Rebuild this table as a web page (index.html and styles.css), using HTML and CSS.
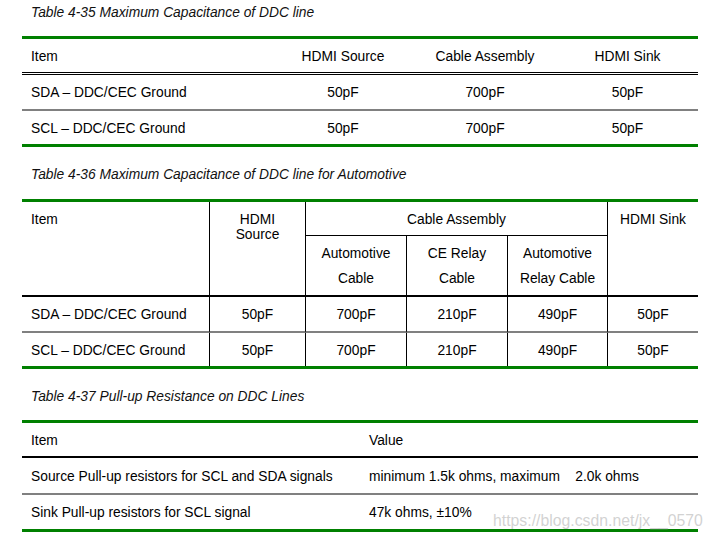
FILE: index.html
```html
<!DOCTYPE html>
<html>
<head>
<meta charset="utf-8">
<link rel="stylesheet" href="styles.css">
</head>
<body>
<div class="page">
  <div class="title">Table 4-35 Maximum Capacitance of DDC line</div>
  <div class="tbl t1">
    <div class="cell head left">Item</div>
    <div class="cell head center">HDMI Source</div>
    <div class="cell head center">Cable Assembly</div>
    <div class="cell head center">HDMI Sink</div>

    <div class="cell r1 left">SDA – DDC/CEC Ground</div>
    <div class="cell r1 center">50pF</div>
    <div class="cell r1 center">700pF</div>
    <div class="cell r1 center">50pF</div>

    <div class="cell r2 left">SCL – DDC/CEC Ground</div>
    <div class="cell r2 center">50pF</div>
    <div class="cell r2 center">700pF</div>
    <div class="cell r2 center">50pF</div>
  </div>

  <div class="title title-gap">Table 4-36 Maximum Capacitance of DDC line for Automotive</div>
  <div class="tbl t2">
    <div class="t2-head">
      <div class="hc h-item">Item</div>
      <div class="hc h-src vl">HDMI<br>Source</div>
      <div class="hc h-cable vl">Cable Assembly</div>
      <div class="hc h-sink vl">HDMI Sink</div>
      <div class="sub s1 vl">Automotive<br>Cable</div>
      <div class="sub s2 vl">CE Relay<br>Cable</div>
      <div class="sub s3 vl">Automotive<br>Relay Cable</div>
    </div>
    <div class="t2-body">
      <div class="cell r1 left">SDA – DDC/CEC Ground</div>
      <div class="cell r1 center vl">50pF</div>
      <div class="cell r1 center vl">700pF</div>
      <div class="cell r1 center vl">210pF</div>
      <div class="cell r1 center vl">490pF</div>
      <div class="cell r1 center vl">50pF</div>

      <div class="cell r2 left">SCL – DDC/CEC Ground</div>
      <div class="cell r2 center vl">50pF</div>
      <div class="cell r2 center vl">700pF</div>
      <div class="cell r2 center vl">210pF</div>
      <div class="cell r2 center vl">490pF</div>
      <div class="cell r2 center vl">50pF</div>
    </div>
  </div>

  <div class="title title-gap">Table 4-37 Pull-up Resistance on DDC Lines</div>
  <div class="tbl t3">
    <div class="cell h3 left">Item</div>
    <div class="cell h3 left">Value</div>

    <div class="cell r31 left">Source Pull-up resistors for SCL and SDA signals</div>
    <div class="cell r31 left">minimum 1.5k ohms, maximum&nbsp;&nbsp;&nbsp; 2.0k ohms</div>

    <div class="cell r32 left">Sink Pull-up resistors for SCL signal</div>
    <div class="cell r32 left">47k ohms, ±10%</div>
  </div>
</div>
<div class="watermark">https://blog.csdn.net/jx__0570</div>
</body>
</html>
```

FILE: styles.css
```css
html, body {
  margin: 0;
  padding: 0;
  background: #ffffff;
}

body {
  width: 713px;
  height: 539px;
  position: relative;
  overflow: hidden;
  font-family: "Liberation Sans", Arial, sans-serif;
  font-size: 13.8px;
  line-height: 16px;
  color: #000000;
}

.page {
  padding: 4px 15px 0 22px;
}

.title {
  box-sizing: border-box;
  font-style: italic;
  height: 16px;
  padding-top: 1px;
  padding-left: 9px;
  line-height: 16px;
  color: #111;
  white-space: nowrap;
  overflow: visible;
}

.title-gap {
  margin-top: 19px;
}

.tbl {
  width: 676px;
  border-top: 3px solid #008000;
  border-bottom: 3px solid #008000;
}

.t1 {
  margin-top: 16px;
  display: grid;
  grid-template-columns: 251px 140px 144px 141px;
}

.t2 {
  margin-top: 17px;
}

.t3 {
  margin-top: 16px;
  display: grid;
  grid-template-columns: 338px 338px;
}

.cell {
  box-sizing: border-box;
  display: flex;
  align-items: center;
  padding-top: 2px;
  white-space: nowrap;
}

.left {
  justify-content: flex-start;
  padding-left: 9px;
}

.center {
  justify-content: center;
}

.vl {
  border-left: 1px solid #000;
}

/* table 1 rows */
.head {
  height: 36px;
  border-bottom: 3px double #000;
}

.r1 {
  height: 36px;
  border-bottom: 2px solid #808080;
}

.r2 {
  height: 33px;
}

/* table 2 */
.t2-head {
  display: grid;
  grid-template-columns: 187px 96px 101px 101px 100px 91px;
  grid-template-rows: 34px 59px;
  border-bottom: 2px solid #000;
}

.t2-body {
  display: grid;
  grid-template-columns: 187px 96px 101px 101px 100px 91px;
}

.hc {
  box-sizing: border-box;
  padding-top: 10px;
  line-height: 15px;
  white-space: nowrap;
}

.h-item {
  grid-column: 1;
  grid-row: 1 / 3;
  padding-left: 9px;
}

.h-src {
  grid-column: 2;
  grid-row: 1 / 3;
  text-align: center;
}

.h-cable {
  grid-column: 3 / 6;
  grid-row: 1;
  text-align: center;
  border-bottom: 1px solid #000;
}

.h-sink {
  grid-column: 6;
  grid-row: 1 / 3;
  text-align: center;
}

.sub {
  box-sizing: border-box;
  grid-row: 2;
  padding-top: 5px;
  line-height: 25px;
  text-align: center;
  white-space: nowrap;
}

.s1 { grid-column: 3; }
.s2 { grid-column: 4; }
.s3 { grid-column: 5; }

/* table 3 */
.h3 {
  height: 35px;
  border-bottom: 2px solid #000;
}

.r31 {
  height: 37px;
  border-bottom: 2px solid #808080;
}

.r32 {
  height: 34px;
}

.watermark {
  position: absolute;
  left: 493px;
  top: 511px;
  font-family: "Liberation Sans", Arial, sans-serif;
  font-size: 15.8px;
  line-height: 20px;
  color: rgba(190, 190, 190, 0.7);
  white-space: nowrap;
}
```
